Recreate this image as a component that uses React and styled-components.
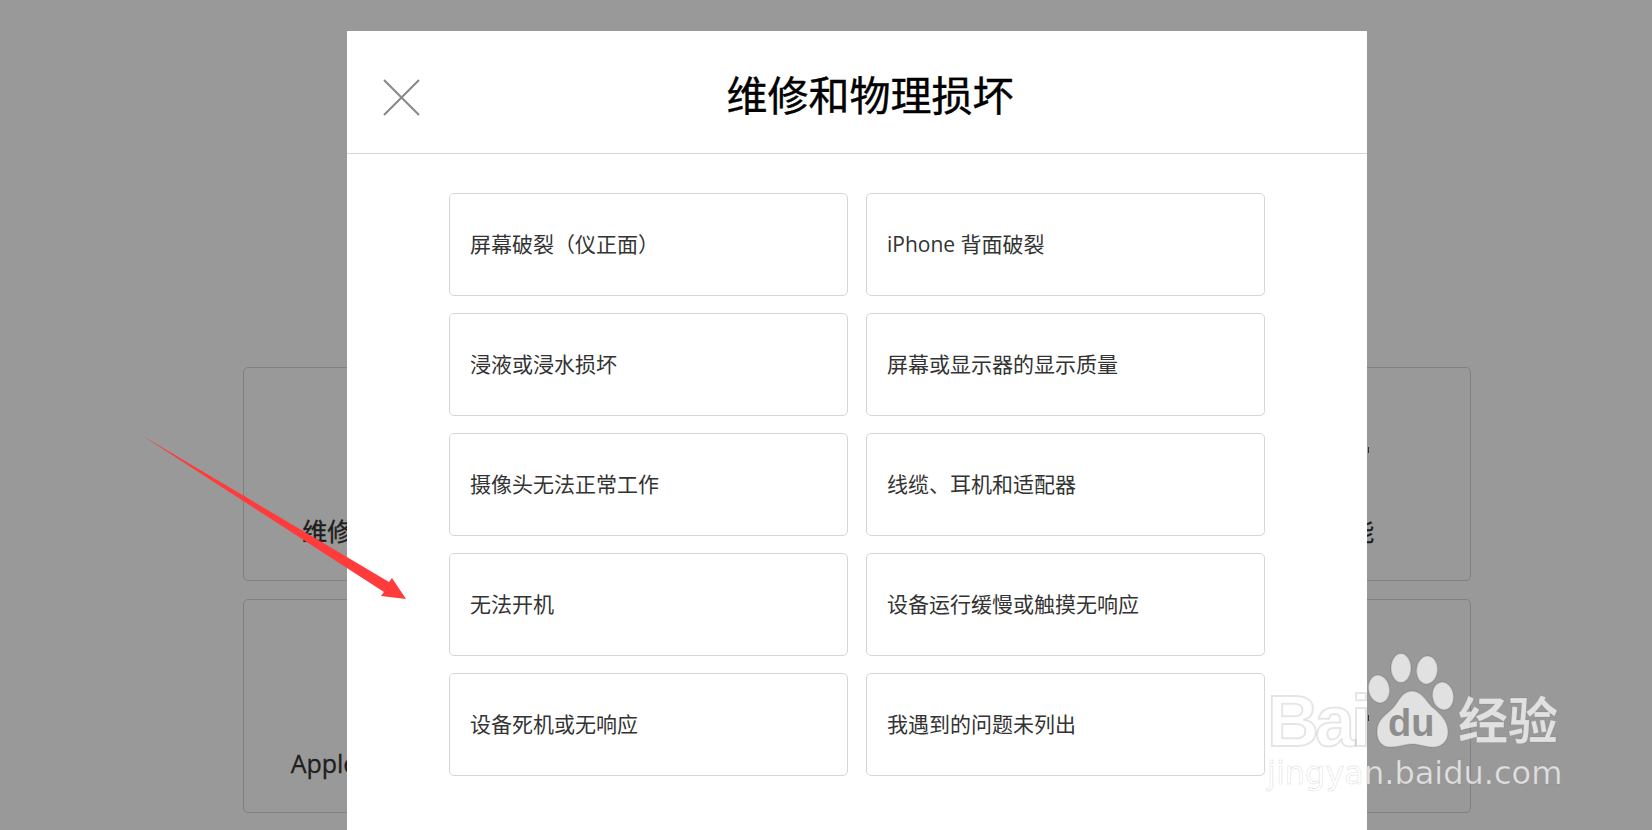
import React from "react";
import styled, { createGlobalStyle } from "styled-components";

const GlobalStyle = createGlobalStyle`
  html, body {
    margin: 0;
    padding: 0;
    height: 100%;
    background: #fff;
    overflow: hidden;
    font-family: "Open Sans", "Noto Sans CJK SC", sans-serif;
  }
`;

const BACK_TOPICS = [
  { label: "维修和物理损坏" },
  { label: "" },
  { label: "" },
  { label: "电池性能", phone: true },
  { label: "Apple 账户和密码" },
  { label: "" },
  { label: "" },
  { label: "", phone: true }
];

const ISSUES = [
  "屏幕破裂（仪正面）",
  "iPhone 背面破裂",
  "浸液或浸水损坏",
  "屏幕或显示器的显示质量",
  "摄像头无法正常工作",
  "线缆、耳机和适配器",
  "无法开机",
  "设备运行缓慢或触摸无响应",
  "设备死机或无响应",
  "我遇到的问题未列出"
];

const Page = styled.div`
  position: relative;
  width: 1652px;
  height: 830px;
  overflow: hidden;
`;

const BackGrid = styled.div`
  display: grid;
  grid-template-columns: repeat(4, 293.5px);
  grid-auto-rows: 214px;
  gap: 18px;
  padding: 367px 0 0 243px;
`;

const BackCard = styled.div`
  display: flex;
  flex-direction: column;
  align-items: center;
  justify-content: flex-end;
  box-sizing: border-box;
  padding-bottom: 31px;
  border: 1px solid #d6d6d6;
  border-radius: 5px;
  color: #333;
`;

const BackIcon = styled.svg`
  width: 90px;
  height: 6px;
  margin-bottom: 60px;
`;

const BackLabel = styled.div`
  font-size: 25px;
  line-height: 36px;
  white-space: nowrap;
  -webkit-text-stroke: 0.3px #333;
`;

const Overlay = styled.div`
  position: absolute;
  inset: 0;
  display: flex;
  justify-content: center;
  padding: 31px 0 0 62px;
  background: rgba(0, 0, 0, 0.4);
`;

const Modal = styled.div`
  width: 1020px;
  height: 100%;
  background: #fff;
`;

const Header = styled.div`
  display: flex;
  align-items: center;
  box-sizing: border-box;
  height: 123px;
  padding: 0 47px 0 36px;
  border-bottom: 1px solid #d6d6d6;
`;

const CloseButton = styled.button`
  display: block;
  flex: none;
  width: 37px;
  height: 37px;
  margin-top: 11px;
  padding: 0;
  border: 0;
  background: none;
  color: #888;
`;

const Title = styled.h1`
  flex: 1;
  margin: 2px 0 0;
  color: #000;
  font-family: "Noto Sans CJK SC", sans-serif;
  font-size: 41px;
  font-weight: 400;
  line-height: 56px;
  text-align: center;
  -webkit-text-stroke: 0.4px #000;
`;

const IssueGrid = styled.div`
  display: grid;
  grid-template-columns: repeat(2, 399px);
  grid-auto-rows: 103px;
  column-gap: 18px;
  row-gap: 17px;
  padding: 39px 0 0 102px;
`;

const IssueCard = styled.div`
  display: flex;
  align-items: center;
  box-sizing: border-box;
  padding: 0 0 3px 20px;
  border: 1px solid #d6d6d6;
  border-radius: 5px;
  color: #333;
  font-size: 21px;
`;

const Arrow = styled.svg`
  position: absolute;
  left: 144px;
  top: 437px;
  width: 262px;
  height: 162px;
  overflow: visible;
`;

const Watermark = styled.div`
  position: absolute;
  left: 1267px;
  top: 653px;
  color: rgba(255, 255, 255, 0.7);
`;

const LogoRow = styled.div`
  display: flex;
  align-items: flex-end;
  height: 94px;
`;

const Bai = styled.span`
  width: 101px;
  margin-bottom: -13px;
  font-family: "Liberation Sans", sans-serif;
  font-size: 72px;
  font-weight: 700;
  line-height: 78px;
  letter-spacing: -4px;
  -webkit-text-stroke: 2px rgba(0, 0, 0, 0.1);
`;

const Paw = styled.div`
  position: relative;
  flex: none;
  width: 86px;
  height: 94px;
`;

const PawShape = styled.svg`
  display: block;
  width: 86px;
  height: 94px;
  overflow: visible;
`;

const Du = styled.span`
  position: absolute;
  left: 20px;
  top: 48px;
  color: #8e8e8e;
  font-family: "Liberation Sans", sans-serif;
  font-size: 38px;
  font-weight: 700;
  line-height: 44px;
`;

const Jingyan = styled.span`
  margin: 0 0 0 4px;
  font-family: "Noto Sans CJK SC", sans-serif;
  font-size: 50px;
  font-weight: 700;
  line-height: 60px;
  -webkit-text-stroke: 1px rgba(0, 0, 0, 0.08);
`;

const Url = styled.div`
  margin-top: 6px;
  font-family: "DejaVu Sans", sans-serif;
  font-size: 32px;
  line-height: 40px;
  white-space: nowrap;
  -webkit-text-stroke: 1px rgba(0, 0, 0, 0.1);
`;

function CloseIcon() {
  return (
    <svg width="37" height="37" viewBox="0 0 37 37">
      <path d="M1 1L36 36M36 1L1 36" stroke="currentColor" strokeWidth="2" fill="none" />
    </svg>
  );
}

export default function App() {
  return (
    <Page>
      <GlobalStyle />
      <BackGrid>
        {BACK_TOPICS.map((topic, i) => (
          <BackCard key={i}>
            {topic.phone && (
              <BackIcon viewBox="0 0 90 6">
                <rect x="89" y="0" width="1" height="6" fill="#555" />
              </BackIcon>
            )}
            <BackLabel>{topic.label}</BackLabel>
          </BackCard>
        ))}
      </BackGrid>
      <Overlay>
        <Modal>
          <Header>
            <CloseButton aria-label="关闭">
              <CloseIcon />
            </CloseButton>
            <Title>维修和物理损坏</Title>
          </Header>
          <IssueGrid>
            {ISSUES.map(issue => (
              <IssueCard key={issue}>{issue}</IssueCard>
            ))}
          </IssueGrid>
        </Modal>
      </Overlay>
      <Arrow viewBox="0 0 262 162">
        <polygon points="-2,-1.5 245,145 248,141 262,162 237,159 240,155" fill="#ff3b3b" />
      </Arrow>
      <Watermark>
        <LogoRow>
          <Bai>Bai</Bai>
          <Paw>
            <PawShape viewBox="0 0 86 94">
              <g fill="rgba(255,255,255,0.7)" stroke="rgba(0,0,0,0.1)" strokeWidth="1.5">
                <ellipse cx="11" cy="36" rx="10.5" ry="14" transform="rotate(-10 11 36)" />
                <ellipse cx="33" cy="15" rx="10" ry="14.5" />
                <ellipse cx="59" cy="17" rx="10.5" ry="14" transform="rotate(5 59 17)" />
                <ellipse cx="75" cy="43" rx="10.5" ry="14" transform="rotate(-8 75 43)" />
                <path d="M44 38C54 38 58 48 64 54C72 60 80 68 80 79C80 90 72 95 62 94C54 93 50 91 44 91C38 91 32 94 24 94C14 95 9 88 9 79C9 66 18 62 25 55C31 48 34 38 44 38Z" />
              </g>
            </PawShape>
            <Du>du</Du>
          </Paw>
          <Jingyan>经验</Jingyan>
        </LogoRow>
        <Url>jingyan.baidu.com</Url>
      </Watermark>
    </Page>
  );
}
